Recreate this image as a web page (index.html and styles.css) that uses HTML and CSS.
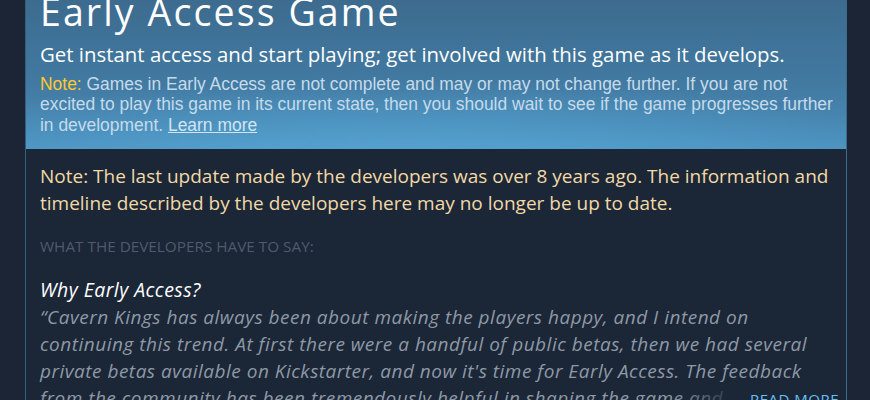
FILE: index.html
```html
<!DOCTYPE html>
<html>
<head>
<meta charset="utf-8">
<link rel="stylesheet" href="styles.css">
</head>
<body>
<div class="ea">
  <div class="ea-head">
    <h1 class="ea-title">Early Access Game</h1>
    <p class="ea-sub">Get instant access and start playing; get involved with this game as it develops.</p>
    <p class="ea-note"><span class="note-label">Note:</span> Games in Early Access are not complete and may or may not change further. If you are not excited to play this game in its current state, then you should wait to see if the game progresses further in development. <a class="learn" href="#">Learn more</a></p>
  </div>
  <div class="ea-body">
    <p class="ea-warn">Note: The last update made by the developers was over 8 years ago. The information and timeline described by the developers here may no longer be up to date.</p>
    <div class="ea-devs">What the developers have to say:</div>
    <div class="ea-q">
      <h3 class="q-title">Why Early Access?</h3>
      <p class="q-text">“Cavern Kings has always been about making the players happy, and I intend on continuing this trend. At first there were a handful of public betas, then we had several private betas available on Kickstarter, and now it's time for Early Access. The feedback from the community has been tremendously helpful in shaping the game and</p>
      <div class="readmore"><span class="fade"></span><span class="rm">Read more</span></div>
    </div>
  </div>
</div>
</body>
</html>
```
FILE: styles.css
```css
html, body { margin: 0; padding: 0; }
body {
  background: #1b2535;
  width: 870px;
  height: 400px;
  overflow: hidden;
  font-family: "Open Sans", "Liberation Sans", sans-serif;
}
.ea {
  margin: -8px 0 0 25px;
  width: 820px;
  border-left: 1px solid #33607f;
  border-right: 1px solid #3a6a8c;
  background: #1b2637;
}
.ea-head {
  background:
    radial-gradient(ellipse 70% 60% at 45% 115%, rgba(88,170,218,0.85) 0%, rgba(88,170,218,0) 100%),
    linear-gradient(180deg, #3c6a8d 0%, #427aa2 60%, #4b90bd 100%);
  padding: 0 4px 14px 14px;
}
.ea-title {
  margin: 0;
  font-weight: 400;
  font-size: 37.5px;
  line-height: 40px;
  letter-spacing: 2.1px;
  color: #ffffff;
}
.ea-sub {
  margin: 9px 0 7px;
  font-size: 20.4px;
  line-height: 26px;
  color: #ffffff;
}
.ea-note {
  margin: 0;
  font-family: "Liberation Sans", Arial, sans-serif;
  font-size: 17.45px;
  line-height: 20.4px;
  color: #c6dbea;
}
.note-label { color: #ffc82c; }
.learn { color: #d3e4f1; text-decoration: underline; }
.ea-body { padding: 14px 14px 0 14px; }
.ea-warn {
  margin: 0;
  font-size: 19px;
  line-height: 27px;
  color: #f1d9a6;
}
.ea-devs {
  margin-top: 19px;
  font-size: 15.3px;
  line-height: 20px;
  text-transform: uppercase;
  color: #4d5c6c;
}
.ea-q { position: relative; margin-top: 20px; }
.q-title {
  margin: 0;
  font-style: italic;
  font-weight: 400;
  font-size: 19.5px;
  line-height: 28px;
  letter-spacing: 0.45px;
  color: #ffffff;
}
.q-text {
  margin: 0;
  font-style: italic;
  font-size: 19px;
  line-height: 27px;
  letter-spacing: 0.5px;
  color: #8e99a5;
}
.readmore {
  position: absolute;
  right: -7px;
  top: 109px;
  display: flex;
  align-items: center;
  height: 27px;
}
.fade {
  width: 70px;
  height: 27px;
  background: linear-gradient(90deg, rgba(27,38,55,0), #1b2637);
}
.rm {
  background: #1b2637;
  color: #66c0f4;
  font-size: 15px;
  letter-spacing: 0.5px;
  text-transform: uppercase;
  padding-left: 8px;
}
```
